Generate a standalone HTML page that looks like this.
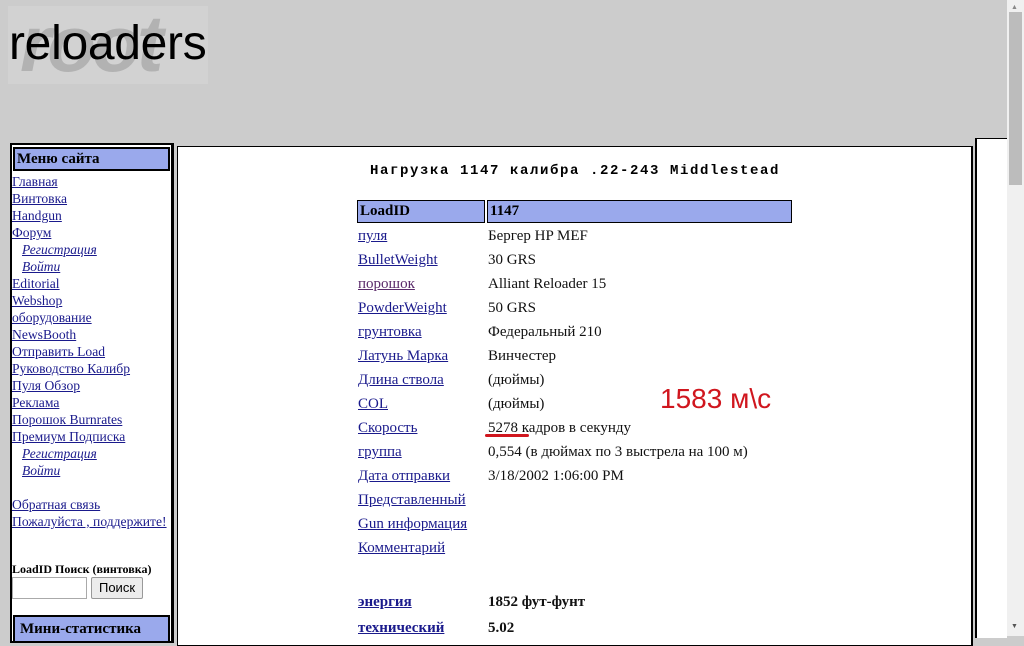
<!DOCTYPE html>
<html><head><meta charset="utf-8"><style>
*{box-sizing:border-box;}
body{margin:0;width:1024px;height:636px;background:#cccccc;position:relative;overflow:hidden;font-family:"Liberation Serif",serif;font-size:15px;}
.a{position:absolute;white-space:nowrap;}
a{color:#1a1a8c;text-decoration:underline;}
.l{position:absolute;left:12px;font-size:13.6px;line-height:17px;}
.i{left:22px;font-style:italic;font-size:13.5px;}
.c1{position:absolute;left:358px;}
.c2{position:absolute;left:488px;color:#111;}
</style></head><body>
<div class="a" style="left:8px;top:6px;width:200px;height:78px;background:#d2d2d2"></div>
<div class="a" style="left:20px;top:-2px;font:italic bold 80px 'Liberation Sans',sans-serif;color:#b2b2b2;letter-spacing:-4px">root</div>
<div class="a" style="left:9px;top:16px;font:48px 'Liberation Sans',sans-serif;color:#000;letter-spacing:-0.3px">reloaders</div>

<div class="a" style="left:10px;top:143px;width:164px;height:500px;background:#fff;border:2px solid #000;border-right-width:3px"></div>
<div class="a" style="left:13px;top:147px;width:157px;height:24px;background:#9aa9ec;border:2px solid #000;font-weight:bold;font-size:15px;line-height:20px;padding-left:2px">Меню сайта</div>
<a class="l" style="top:173px">Главная </a>
<a class="l" style="top:190px">Винтовка </a>
<a class="l" style="top:207px">Handgun </a>
<a class="l" style="top:224px">Форум </a>
<a class="l i" style="top:241px">Регистрация </a>
<a class="l i" style="top:258px">Войти</a>
<a class="l" style="top:275px">Editorial </a>
<a class="l" style="top:292px">Webshop </a>
<a class="l" style="top:309px">оборудование </a>
<a class="l" style="top:326px">NewsBooth </a>
<a class="l" style="top:343px">Отправить Load </a>
<a class="l" style="top:360px">Руководство Калибр </a>
<a class="l" style="top:377px">Пуля Обзор </a>
<a class="l" style="top:394px">Реклама </a>
<a class="l" style="top:411px">Порошок Burnrates </a>
<a class="l" style="top:428px">Премиум Подписка </a>
<a class="l i" style="top:445px">Регистрация </a>
<a class="l i" style="top:462px">Войти</a>
<a class="l" style="top:496px">Обратная связь </a>
<a class="l" style="top:513px">Пожалуйста , поддержите!</a>
<div class="a" style="left:12px;top:562px;font-weight:bold;font-size:12px">LoadID Поиск (винтовка)</div>
<div class="a" style="left:12px;top:577px;width:75px;height:22px;background:#fff;border:1px solid #aaa"></div>
<div class="a" style="left:91px;top:577px;width:52px;height:22px;background:#ececec;border:1px solid #999;border-radius:2px;font:13px 'Liberation Sans',sans-serif;text-align:center;line-height:20px">Поиск</div>
<div class="a" style="left:13px;top:615px;width:157px;height:28px;background:#9aa9ec;border:2px solid #000;font-weight:bold;font-size:15px;line-height:24px;padding-left:5px">Мини-статистика</div>

<div class="a" style="left:177px;top:146px;width:796px;height:500px;background:#fff;border:1px solid #000;border-right-width:2px"></div>
<div class="a" style="left:975px;top:138px;width:32px;height:500px;background:#fff;border-left:2px solid #000;border-top:1px solid #000"></div>
<div class="a" style="left:1007px;top:0;width:17px;height:636px;background:#f0f0f0"></div>
<div class="a" style="left:1009px;top:12px;width:13px;height:173px;background:#bcbcbc"></div>
<div class="a" style="left:1011px;top:3px;font-size:7px;color:#888">▲</div>
<div class="a" style="left:1011px;top:622px;font-size:7px;color:#555">▼</div>

<div class="a" style="left:370px;top:163px;font:bold 14px 'Liberation Mono',monospace;letter-spacing:1.6px">Нагрузка 1147 калибра .22-243 Middlestead</div>
<div class="a" style="left:357px;top:200px;width:128px;height:23px;background:#9aa9ec;border:1px solid #000;font-weight:bold;line-height:21px;padding-left:2px">LoadID</div>
<div class="a" style="left:487px;top:200px;width:305px;height:23px;background:#9aa9ec;border:1px solid #000;font-weight:bold;line-height:21px;padding-left:2px">1147</div>
<div class="a" style="top:228px;left:0;width:900px">
<a class="c1" style="top:0">пуля</a><span class="c2" style="top:0">Бергер HP MEF</span>
<a class="c1" style="top:24px">BulletWeight</a><span class="c2" style="top:24px">30 GRS</span>
<a class="c1" style="top:48px;color:#5a2a6a">порошок</a><span class="c2" style="top:48px">Alliant Reloader 15</span>
<a class="c1" style="top:72px">PowderWeight</a><span class="c2" style="top:72px">50 GRS</span>
<a class="c1" style="top:96px">грунтовка</a><span class="c2" style="top:96px">Федеральный 210</span>
<a class="c1" style="top:120px">Латунь Марка</a><span class="c2" style="top:120px">Винчестер</span>
<a class="c1" style="top:144px">Длина ствола</a><span class="c2" style="top:144px">(дюймы)</span>
<a class="c1" style="top:168px">COL</a><span class="c2" style="top:168px">(дюймы)</span>
<a class="c1" style="top:192px">Скорость</a><span class="c2" style="top:192px">5278 кадров в секунду</span>
<a class="c1" style="top:216px">группа</a><span class="c2" style="top:216px">0,554 (в дюймах по 3 выстрела на 100 м)</span>
<a class="c1" style="top:240px">Дата отправки</a><span class="c2" style="top:240px">3/18/2002 1:06:00 PM</span>
<a class="c1" style="top:264px">Представленный</a>
<a class="c1" style="top:288px">Gun информация</a>
<a class="c1" style="top:312px">Комментарий</a>
<a class="c1" style="top:366px;font-weight:bold">энергия</a><span class="c2" style="top:366px;font-weight:bold">1852 фут-фунт</span>
<a class="c1" style="top:392px;font-weight:bold">технический</a><span class="c2" style="top:392px;font-weight:bold">5.02</span>
</div>
<div class="a" style="left:485px;top:434px;width:44px;height:3px;background:#d0161e;border-radius:2px"></div>
<div class="a" style="left:660px;top:383px;font:28px 'Liberation Sans',sans-serif;color:#d0161e">1583 м\с</div>
</body></html>
